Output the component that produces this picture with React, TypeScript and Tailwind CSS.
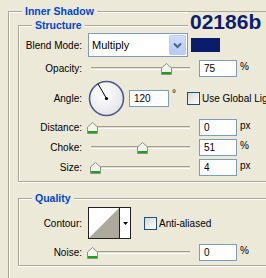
import React from 'react';

interface SliderRowProps {
    label: string;
    value: string;
    unit: string;
    pos: number; // thumb position, 0-100
}

const Thumb: React.FC<{ pos: number }> = ({ pos }) => (
    <svg
        className="absolute top-[3px]"
        style={{ left: 4 + pos * 0.99 - 5.5 }}
        width="11"
        height="12"
        viewBox="0 0 11 12"
    >
        <path d="M0.5 5 L5.5 0.5 L10.5 5 V11.5 H0.5 Z" fill="#f4f4ef" stroke="#86977f" />
        <rect x="1" y="9" width="9" height="2" fill="#20a020" />
    </svg>
);

const Field: React.FC<{ className?: string; children: React.ReactNode }> = ({ className = '', children }) => (
    <div className={`h-[17px] border border-[#7f9db9] bg-white pl-[4px] flex items-center ${className}`}>
        {children}
    </div>
);

const Checkbox: React.FC = () => (
    <div className="w-[13px] h-[13px] border border-[#1c5180] bg-gradient-to-br from-[#d8d8d2] to-white" />
);

const SliderRow: React.FC<SliderRowProps> = ({ label, value, unit, pos }) => (
    <div className="flex items-center h-[17px]">
        <span className="w-[63px] text-right">{label}</span>
        <div className="relative ml-[6px] w-[102px] h-[17px] flex items-center">
            <div className="ml-[3px] w-[99px] h-[3px] border-t border-[#a19e8f] bg-[#e0ddcf] border-b border-b-white" />
            <Thumb pos={pos} />
        </div>
        <Field className="ml-[9px] w-[38px]">{value}</Field>
        <span className="self-start mt-[1px] ml-[3px] leading-[12px]">{unit}</span>
    </div>
);

const Legend: React.FC<{ children: React.ReactNode }> = ({ children }) => (
    <div className="absolute left-[13px] -top-[7px] h-[13px] leading-[13px] px-[3px] bg-[#ece9d8] text-[10.5px] font-bold text-[#0046d5]">
        {children}
    </div>
);

const Group: React.FC<{ title: string; className?: string; children: React.ReactNode }> = ({ title, className = '', children }) => (
    <div className={`relative w-[300px] border-l border-t border-b border-[#aca899] shadow-[inset_1px_1px_0_#fff,0_1px_0_#fff] ${className}`}>
        <Legend>{title}</Legend>
        {children}
    </div>
);

const Dial: React.FC = () => (
    <svg className="ml-[6px]" width="37" height="37" viewBox="0 0 37 37">
        <defs>
            <radialGradient id="dialFill" cx="0.4" cy="0.35" r="0.7">
                <stop offset="0" stopColor="#ffffff" />
                <stop offset="1" stopColor="#e4e4e8" />
            </radialGradient>
        </defs>
        <circle cx="18.5" cy="18.5" r="17" fill="url(#dialFill)" stroke="#4b5a86" strokeWidth="1.6" />
        <line x1="18.5" y1="18.5" x2="10" y2="3.8" stroke="#000" strokeWidth="1" />
        <circle cx="18.5" cy="18.5" r="1.6" fill="#000" />
    </svg>
);

const App: React.FC = () => {
    return (
        <div className="relative w-[266px] h-[278px] overflow-hidden bg-[#ece9d8] font-['Liberation_Sans',Arial,sans-serif] text-[10px] text-black">
            <div className="relative ml-[8px] mt-[11px] w-[300px] h-[300px] border-l border-t border-[#aca899] shadow-[inset_1px_1px_0_#fff] pl-[9px] pt-[13px]">
                <Legend>Inner Shadow</Legend>

                <Group title="Structure" className="pt-[7px] pb-[5px]">
                    {/* Blend mode */}
                    <div className="flex items-center h-[24px]">
                        <span className="w-[63px] text-right">Blend Mode:</span>
                        <div className="ml-[6px] w-[100px] h-[24px] border border-[#7f9db9] bg-white flex items-center pl-[3px] text-[11px]">
                            Multiply
                            <div className="ml-auto mr-[1px] w-[17px] h-[20px] rounded-[2px] border border-[#b8cbf4] bg-gradient-to-b from-[#d0ddfd] to-[#b6c9f5] flex items-center justify-center">
                                <svg width="9" height="7" viewBox="0 0 9 7">
                                    <path d="M1 1.5 L4.5 5 L8 1.5" fill="none" stroke="#4d6185" strokeWidth="2" />
                                </svg>
                            </div>
                        </div>
                        <div className="ml-[3px] w-[29px] h-[14px] bg-[#0b1c6b]" />
                    </div>

                    <div className="mt-[3px]">
                        <SliderRow label="Opacity:" value="75" unit="%" pos={75} />
                    </div>

                    {/* Angle */}
                    <div className="flex items-center h-[37px] mt-[3px]">
                        <span className="w-[63px] text-right">Angle:</span>
                        <Dial />
                        <Field className="ml-[4px] w-[40px] h-[16px]">120</Field>
                        <span className="self-start mt-[9px] ml-[3px] w-[6px] leading-[10px]">°</span>
                        <div className="ml-[9px]">
                            <Checkbox />
                        </div>
                        <span className="ml-[2px] whitespace-nowrap">Use Global Light</span>
                    </div>

                    <div className="mt-[2px]">
                        <SliderRow label="Distance:" value="0" unit="px" pos={0} />
                    </div>
                    <div className="mt-[3px]">
                        <SliderRow label="Choke:" value="51" unit="%" pos={51} />
                    </div>
                    <div className="mt-[3px]">
                        <SliderRow label="Size:" value="4" unit="px" pos={3.5} />
                    </div>
                </Group>

                <Group title="Quality" className="mt-[16px] pt-[8px] pb-[4px]">
                    <div className="flex items-center h-[32px]">
                        <span className="w-[63px] text-right">Contour:</span>
                        <div className="ml-[6px] flex h-[32px] w-[43px] border border-[#222]">
                            <svg width="30" height="30" viewBox="0 0 30 30">
                                <rect width="30" height="30" fill="#fff" />
                                <polygon points="0,30 30,0 30,30" fill="#aeaa9b" />
                            </svg>
                            <div className="flex-1 border-l border-[#222] bg-white flex items-center justify-center">
                                <svg width="5" height="3" viewBox="0 0 5 3">
                                    <polygon points="0,0 5,0 2.5,3" fill="#000" />
                                </svg>
                            </div>
                        </div>
                        <div className="ml-[13px]">
                            <Checkbox />
                        </div>
                        <span className="ml-[2px]">Anti-aliased</span>
                    </div>
                    <div className="mt-[5px]">
                        <SliderRow label="Noise:" value="0" unit="%" pos={0} />
                    </div>
                </Group>
            </div>

            <div className="absolute left-[188px] top-[12px] w-[78px] h-[17px] bg-[#ece9d8] pl-[2px]">
                <div className="-mt-[1px] leading-none text-[21px] font-bold text-[#0b1e6e]">02186b</div>
            </div>
        </div>
    );
};

export default App;
